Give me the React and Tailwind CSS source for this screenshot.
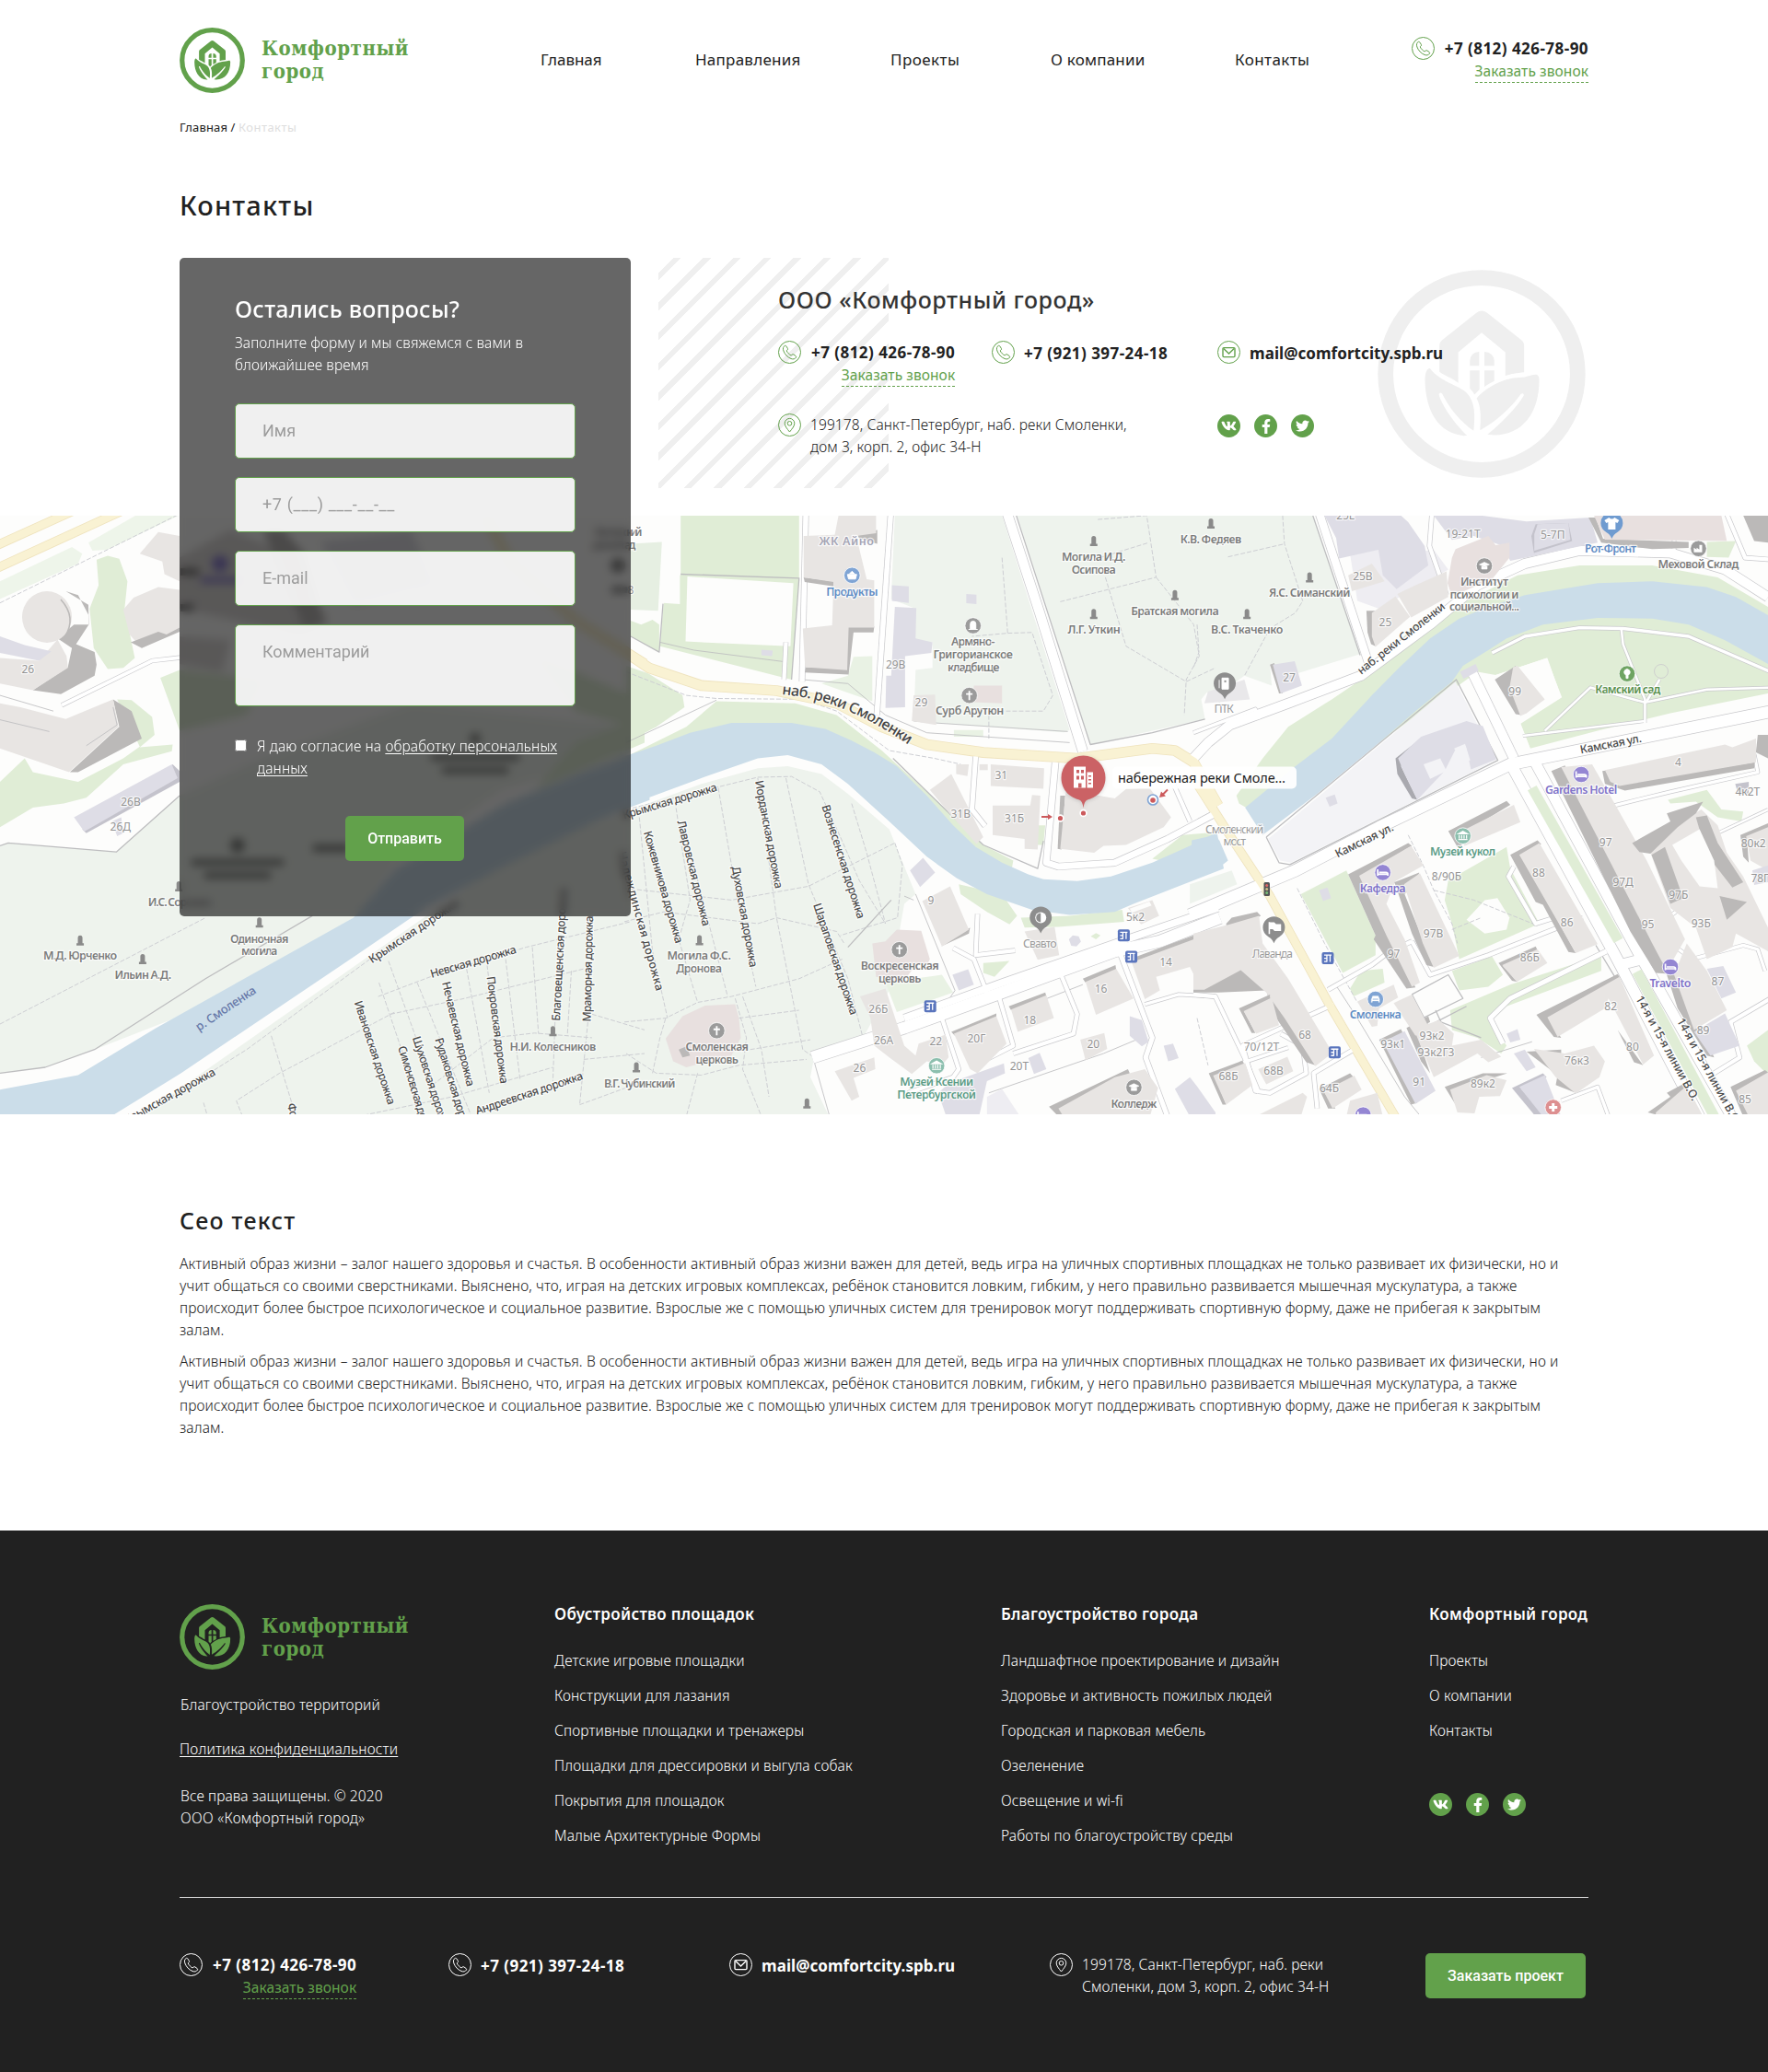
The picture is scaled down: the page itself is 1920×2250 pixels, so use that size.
import React from "react";
import { FaVk, FaFacebookF, FaTwitter } from "react-icons/fa";

/* ---------- brand ---------- */

function LogoMark({ className }) {
  return (
    <svg viewBox="20 25 676 676" className={className} fill="currentColor" aria-hidden="true">
      <circle cx="358" cy="363" r="312" fill="none" stroke="currentColor" strokeWidth="50" />
      <path d="M221 356V272Q221 260 230 253L341 165Q358 151 376 165L487 253Q496 260 496 272V358C470 361 455 362 435 370V293L358 229L282 293V392C262 376 240 370 221 356Z" />
      <path d="M320 337V320Q322 293 350 291V337ZM367 337V291Q396 293 399 320V337ZM320 352H351V414L335 430Q327 417 320 411ZM367 352H399V386Q380 395 367 405Z" />
      <path d="M190 345C180 345 174 360 174 385C176 480 215 556 300 564L311 563C285 540 235 480 219 430Q221 421 229 426C250 470 290 520 332 548C337 500 338 455 310 425C285 400 222 388 190 345Z" />
      <path d="M538 366Q545 370 545 382C546 490 490 562 400 562L377 560C420 525 470 475 495 433Q496 424 486 428C460 465 410 515 353 546C356 500 356 470 342 442C370 408 430 376 480 375C510 374 525 362 538 366Z" />
    </svg>
  );
}

function Logo() {
  return (
    <div className="flex items-center gap-[18px] text-[#62a14b]">
      <LogoMark className="size-[71px]" />
      <div className="font-['DejaVu_Serif_Condensed','DejaVu_Serif',serif] text-[22px] leading-[25px] font-bold tracking-[0.55px]">
        Комфортный
        <br />
        город
      </div>
    </div>
  );
}

/* ---------- small icons ---------- */

function Ring({ children }) {
  return (
    <svg viewBox="0 0 25 25" className="size-[25px] shrink-0" fill="none" stroke="currentColor" strokeWidth="1" aria-hidden="true">
      <circle cx="12.5" cy="12.5" r="12" />
      {children}
    </svg>
  );
}
const PhoneIcon = () => (
  <Ring>
    <path d="M7.2 5.5C5.4 6.5 5 8.5 5.9 11C7.4 14.9 10.2 17.9 14 19.5C16.4 20.4 18.3 19.9 19.5 18.1C19.8 17.5 19.7 17 19.2 16.6L16.8 14.9C16.2 14.5 15.6 14.6 15.1 15.1L14.2 16C12.1 15 10.1 12.9 9.2 10.9L10.1 10C10.6 9.5 10.7 9 10.4 8.4L8.8 5.9C8.4 5.3 7.9 5.1 7.2 5.5Z" />
  </Ring>
);
const MailIcon = () => (
  <Ring>
    <rect x="6" y="7.6" width="13" height="10" rx="1" strokeWidth="1.4" />
    <path d="M6.8 8.4L12.5 14L18.2 8.4" strokeWidth="1.4" />
  </Ring>
);
const PlaceIcon = () => (
  <Ring>
    <path d="M12.5 20C9.6 16.4 7.2 13.6 7.2 10.7A5.3 5.3 0 0 1 17.8 10.7C17.8 13.6 15.4 16.4 12.5 20Z" />
    <circle cx="12.5" cy="10.8" r="2.3" />
  </Ring>
);

function Socials() {
  return (
    <div className="flex gap-[15px] text-white">
      <a className="flex size-[25px] items-center justify-center rounded-full bg-[#62a14b]"><FaVk className="size-[17px]" /></a>
      <a className="flex size-[25px] items-center justify-center rounded-full bg-[#62a14b]"><FaFacebookF className="size-[16px]" /></a>
      <a className="flex size-[25px] items-center justify-center rounded-full bg-[#62a14b]"><FaTwitter className="size-[15px]" /></a>
    </div>
  );
}

/* ---------- contact pieces ---------- */

function Callback() {
  return (
    <div className="flex gap-[11px]">
      <PhoneIcon />
      <div className="flex flex-col items-end pt-px">
        <span className="text-[17px] leading-6 font-bold tracking-[0.46px] text-[var(--ink)]">+7 (812) 426-78-90</span>
        <a className="border-b border-dashed border-[#62a14b] text-[15.5px] leading-6 tracking-[0.08px] text-[#62a14b]">Заказать звонок</a>
      </div>
    </div>
  );
}
function Line({ icon, children }) {
  return (
    <div className="flex gap-[10px]">
      {icon}
      <div className="pt-[2px] text-[17px] leading-6 font-bold text-[var(--ink)]">{children}</div>
    </div>
  );
}

/* ---------- map ---------- */

const TILES = {
  A: { ox: 0, sx: 2.24 },
  B: { ox: 680, sx: 2.45 },
  C: { ox: 1300, sx: 2.529 },
};
const SY = 2.34;
const at = (t, x, y) => [TILES[t].ox + x / TILES[t].sx, 550 + y / SY];

const GREEN = "#e0edd6", GRAVE = "#eef3ed", WATER = "#cbdde9", B1 = "#e8e5e3", B2 = "#bbb9b8", LIL = "#deDDe6", LIL2 = "#c4c3cc", W = "#fdfdfc";
const ROAD = "#fff", EDGE = "#c9c9cc", YEL = "#f9f2d3", YEDGE = "#efe3bd";

/* [fill, points] */
const FILLS = {
  A: [
    ["#eef5ea", "215,92 330,23 435,23 260,110 225,112"],
    ["#eef5ea", "0,190 175,103 200,120 190,145 0,235"],
    [GREEN, "235,135 262,125 290,133 310,190 303,260 328,385 300,410 262,413 228,360 218,260 240,200"],
    [GREEN, "390,435 437,415 640,440 600,530 437,570"],
    [GREEN, "1300,380 1400,420 1534,480 1534,560 1400,520"],
    [GREEN, "0,700 60,640 80,675 190,700 300,640 340,610 285,490 320,492 370,535 376,580 340,612 420,605 418,622 300,655 210,740 155,755 80,765 0,815"],
    [GRAVE, "0,862 20,855 283,878 437,735 640,640 1000,500 1534,560 1534,625 1220,720 960,910 860,1045 500,1270 230,1380 110,1425 0,1440"],
    [GRAVE, "350,1545 470,1455 1010,1060 1300,850 1534,775 1568,768 1568,1545"],
    [GREEN, "1400,600 1534,545 1568,570 1568,600 1300,720"],
    [WATER, "0,1482 190,1445 380,1325 860,1045 963,920 1230,755 1430,670 1534,632 1580,612 1580,746 1534,764 1447,800 1230,912 1035,1020 860,1145 440,1440 270,1550 0,1550"],
    ["#dedbda", "437,130 560,60 700,120 800,290 730,330 620,300 437,260"],
    ["#bbb8b7", "640,60 690,60 740,120 790,300 740,310 690,180"],
    ["#dedbda", "437,330 560,340 540,420 437,400"],
    ["#e0dfe6", "780,90 1000,60 1060,200 860,250"],
    [B1, "340,120 385,65 437,75 437,190 400,172 395,140"],
    [B1, "300,262 325,232 385,205 437,212 437,310 345,360 315,325"],
    [B2, "318,345 345,360 437,318 437,308 405,325 385,318"],
    [B2, "140,335 180,300 215,300 215,275 190,225 160,215 215,250 216,300 185,350 230,370 235,402 230,430 148,477 80,467 165,408 175,360"],
    [B1, "0,385 95,392 140,338 162,380 165,410 80,467 0,450"],
    [LIL, "0,330 60,352 125,368 95,392 0,372"],
    [B2, "275,490 320,520 345,590 190,675 170,675 290,560"],
    [B1, "0,500 50,510 140,535 160,540 275,490 288,560 168,675 0,615"],
    [LIL2, "420,655 437,672 437,700 210,830 200,820"],
    [LIL, "180,790 418,655 432,690 205,826"],
    [LIL, "272,800 295,790 300,830 285,838"],
  ],
  B: [
    [GREEN, "145,23 460,23 460,182 440,440 90,355 100,245 145,172"],
    [W, "100,23 143,23 143,248 98,245"],
    [W, "163,178 445,195 437,355 158,343"],
    ["#e6efe2", "12,95 95,90 85,265 12,262"],
    [GREEN, "12,290 40,300 70,288 88,300 88,370 12,330"],
    [GREEN, "0,405 60,425 150,480 155,510 80,560 0,600"],
    [GRAVE, "715,23 1000,23 1180,568 1165,574 820,550 765,545 770,415 815,410 815,345 745,340 770,260 705,235"],
    [GRAVE, "1040,23 1580,23 1580,500 1545,472 1530,490 1540,540 1235,605"],
    ["#e9f2e4", "605,382 655,380 655,495 520,450 590,430"],
    [GRAVE, "0,775 200,705 350,665 430,660 520,680 590,730 700,820 770,985 740,1010 700,1230 630,1350 500,1400 490,1450 540,1550 0,1550"],
    [GREEN, "12,630 160,560 240,495 450,500 560,530 680,620 800,725 950,860 1030,900 1025,925 950,890 800,765 600,610 440,570"],
    [GREEN, "885,960 1000,985 1040,1040 1020,1062 960,1030 890,985"],
    [GREEN, "1050,1045 1180,1040 1320,1025 1325,1055 1150,1068 1060,1070"],
    [GREEN, "1400,895 1480,835 1568,828 1568,860 1500,880 1450,905"],
    [GREEN, "950,1160 1020,1155 980,1195 950,1185"],
    ["#e9f2e4", "690,1210 840,1190 870,1235 720,1285"],
    [GREEN, "1090,810 1115,810 1110,860 1090,860"],
    [GREEN, "1236,1092 1250,1084 1262,1090 1250,1100"],
    ["#e9f2e4", "872,568 950,568 950,585 872,585"],
    [WATER, "-20,640 80,608 170,575 280,550 440,550 530,565 600,595 660,625 720,660 800,735 870,810 930,865 1000,905 1070,935 1110,947 1200,952 1290,940 1400,905 1500,862 1572,828 1590,920 1350,1010 1300,1030 1180,1038 1080,1025 960,985 880,945 800,890 700,800 590,705 520,655 430,632 350,640 200,690 -20,768"],
  ],
  C: [
    [GRAVE, "-40,23 318,23 448,375 220,440 200,400 205,455 130,430 100,450 -40,480"],
    ["#eeedf2", "410,60 560,120 650,110 690,160 500,260 440,240"],
    [GREEN, "115,755 108,735 180,640 250,560 370,490 450,440 600,300 750,235 880,175 1050,150 1250,150 1430,180 1568,255 1568,475 1300,525 1100,570 915,615 888,550 1000,485 962,385 820,428 770,420 200,800"],
    [W, "760,430 820,428 960,385 1002,485 888,552 915,615 840,620"],
    [GREEN, "285,985 410,925 490,1090 490,1140 400,1185"],
    [GREEN, "420,1225 450,1180 510,1175 515,1210 430,1245"],
    [GREEN, "680,1000 690,950 850,865 860,920 940,1060 720,1150 700,1060"],
    [W, "740,1050 790,1000 825,995 858,1045 850,1075 790,1085"],
    [GREEN, "700,1180 810,1143 840,1190 800,1220 720,1230"],
    [GREEN, "695,1280 860,1215 1110,1140 1110,1180 850,1270 805,1310 850,1370 835,1390 770,1350 700,1330"],
    [GREEN, "1293,745 1400,720 1440,770 1500,775 1495,800 1430,790 1370,750 1300,755"],
    [GREEN, "1510,1370 1568,1330 1568,1445 1530,1410"],
    [GREEN, "1400,90 1480,88 1460,130 1400,128"],
    [GRAVE, "-20,960 95,925 110,960 -20,1010"],
    [WATER, "-15,848 50,835 62,850 85,900 60,918 -15,948"],
    [WATER, "132,765 270,660 370,590 480,480 560,405 640,335 720,285 800,255 900,225 1000,210 1100,195 1250,190 1400,205 1480,230 1572,278 1572,402 1450,340 1350,300 1250,285 1100,283 950,300 850,335 800,365 730,405 700,445 600,520 500,600 330,730 180,835"],
  ],
};

/* [width, points, kind]; kind r = cased white road, g = green median, y = yellow road, d = dashed path, s = thin solid line */
const LINES = {
  A: [
    [22, "-10,100 185,8", "y"], [22, "-10,158 310,5", "y"],
    [2, "0,245 435,20", "d"],
    [9, "150,505 370,392 437,384", "r"],
    [2, "0,480 130,520", "s"], [2, "0,542 120,572", "s"], [2, "210,608 285,555 275,510", "s"],
    [3, "0,862 20,855 283,878 437,735", "s"],
    [2, "0,1315 500,1045", "d"],
    [3, "0,1440 110,1425 230,1380 500,1200 760,1040", "s"],
    [2, "900,1150 600,1380 350,1545", "d"],
    [2, "920,1245 1060,1190 1280,1120 1534,1055", "d"],
    [2, "950,1290 1130,1250 1420,1175", "d"],
    [2, "945,1155 1060,1490", "d"], [2, "922,1210 1030,1545", "d"], [2, "1015,1210 1145,1545", "d"],
    [2, "1135,1175 1190,1490", "d"], [2, "1185,1165 1200,1300 1230,1470", "d"], [2, "1230,1150 1265,1455", "d"],
    [2, "1295,1120 1310,1340", "d"], [2, "1390,1180 1380,1345", "d"],
    [2, "1040,1480 1200,1350 1300,1338 1440,1350", "d"],
    [2, "660,1345 720,1550", "d"], [2, "590,1550 575,1510 680,1440 960,1285", "d"],
    [2, "870,1550 1100,1500 1345,1425", "d"], [2, "1440,1290 1568,1330", "d"], [2, "1420,1405 1568,1390", "d"], [2, "1430,1310 1410,1520", "d"], [2, "1350,1310 1345,1460", "d"],
    [2, "1410,1520 1568,1460", "d"], [2, "495,1515 505,1550", "d"],
    [26, "1180,20 1240,140 1400,290 1568,400", "y"],
  ],
  B: [
    [2, "-5,970 280,1000 485,965 715,855", "d"], [2, "-5,1055 100,1030 350,1060 400,1045 560,1080 580,1110", "d"],
    [2, "35,790 70,1130 110,1300", "d"], [2, "130,750 170,1000 140,1100 190,1260", "d"], [2, "150,800 270,1245", "d"],
    [2, "245,715 300,1020 345,1220", "d"], [2, "350,690 400,1045 470,1380 500,1400", "d"], [2, "425,690 485,960 590,1200 630,1350", "d"],
    [2, "0,770 350,688 440,686 515,725 570,840 620,950 690,1060", "d"], [2, "600,755 640,880 690,1060", "d"],
    [2, "715,855 735,910 722,1045 570,1090", "d"], [3, "590,1120 705,1000", "s"], [2, "765,1000 740,990", "s"],
    [2, "-5,1310 105,1300 190,1260 280,1245 460,1200 575,1150", "d"],
    [2, "70,1440 90,1350 105,1300", "d"], [2, "0,1390 80,1440 200,1445 300,1420 480,1405", "d"], [2, "310,1245 360,1380 380,1500", "d"], [2, "290,1250 320,1350 310,1430 360,1550", "d"],
    [2, "190,1440 160,1550", "d"], [2, "300,1300 460,1280", "d"], [2, "330,1380 490,1355", "d"],
    [2, "1155,242 1410,180", "d"], [2, "1410,180 1510,300 1525,380 1490,440 1485,530", "d"], [2, "1275,180 1330,355 1490,445 1568,410", "d"],
    [2, "1255,33 1385,23 1410,180", "d"], [2, "1260,130 1390,92", "d"],
    [2, "1000,130 1015,322 920,330", "d"], [2, "1015,322 1080,320 1135,480 1110,520 965,520 965,590", "d"],
    [3, "145,172 460,182 440,440", "s"], [3, "98,247 88,370 12,330", "s"], [2, "90,345 180,365 425,395", "s"],
    [2, "0,420 160,480 240,488 470,490 560,520 700,620 820,640 890,655", "d"],
    [2, "0,600 240,492", "s"],
    [26, "-5,368 60,410 200,455 400,468 560,500 680,560 800,605 950,625 1200,640 1400,615 1460,620 1510,650 1575,760", "y"],
    [2, "470,440 590,450 690,530 800,575 1180,600", "s"],
    [2, "765,545 820,550 1175,572", "s"],
    [13, "478,20 468,445", "r"], [13, "704,20 667,530", "r"], [10, "425,345 420,440", "r"],
    [24, "1014,18 1100,270 1215,622", "r"], [3, "1038,23 1235,605 1400,575 1540,540", "s"],
    [16, "1142,650 1118,905 1150,915 1300,905 1440,845 1568,780", "r"],
    [3, "710,640 860,780 950,860 1095,920 1110,850", "s"],
    [12, "930,635 920,770 955,812", "r"],
    [10, "1440,670 1500,800", "r"],
    [30, "495,1400 740,1325 1000,1235 1300,1130 1420,1105 1580,1045", "r"],
    [18, "740,1300 1000,1210 1330,1100 1575,1020", "r"],
    [10, "870,1122 925,1150 960,1235", "r"], [10, "935,1035 930,1140 1035,1128", "r"],
    [10, "990,1240 1030,1370 965,1402", "r"], [10, "1155,1185 1200,1290 1190,1340 1030,1390", "r"],
    [12, "1312,1130 1400,1350 1382,1400 1440,1550", "r"], [8, "1380,1265 1470,1240 1568,1245", "r"],
    [10, "840,1300 885,1430 870,1450 750,1490", "r"],
    [2, "770,985 875,1230 860,1250", "s"],
    [2, "500,1410 540,1545", "s"], [2, "965,1490 1270,1390 1370,1350", "s"], [2, "1120,1250 1215,1215", "s"],
  ],
  C: [
    [2, "235,23 240,95 290,240 270,270 200,310 130,430", "d"], [2, "85,128 240,95", "d"], [2, "0,300 5,370 -10,410", "d"],
    [22, "-10,690 100,850 200,990 360,1260 560,1575", "y"],
    [24, "-10,640 30,600 90,555 250,500 450,430 640,300 770,200 900,145 1050,112 1300,118 1450,160 1568,230", "r"],
    [20, "336,18 470,395", "r"], [3, "318,23 448,378", "s"],
    [10, "645,20 638,100 685,225", "r"], [10, "1455,20 1505,130 1575,135", "r"], [8, "1310,80 1310,130", "r"],
    [8, "-10,575 160,515 170,540", "r"],
    [3, "190,840 712,440 826,645 255,910 225,905 190,840", "s"],
    [30, "-20,1038 270,925 500,815 860,655 1100,610 1580,520", "r"],
    [24, "755,420 870,640", "r"],
    [28, "865,660 1145,1135 1165,1170 1390,1570", "r"], [26, "925,645 1215,1140 1240,1180 1480,1570", "r"], [26, "1160,1165 1245,1145", "r"],
    [26, "920,715 1157,1103", "g"], [26, "1208,1182 1432,1570", "g"],
    [8, "810,372 900,330 1050,308 1170,310 1350,330 1575,420", "r"], [6, "1165,310 1170,350 1230,490 1230,550", "r"],
    [6, "955,570 1080,460 1230,498 1400,465 1575,460", "r"], [6, "1235,495 1270,440", "r"],
    [6, "895,583 1230,545", "r"],
    [2, "650,975 760,1000 935,1065", "d"], [2, "580,835 620,910 650,975 700,1060 715,1110", "d"], [2, "700,1075 780,1045", "d"],
    [10, "360,1228 480,1165 530,1130 590,1105", "r"], [10, "590,1105 640,1190 800,1140 1060,1045", "r"],
    [10, "870,915 855,940 930,1060 1000,1040", "r"],
    [12, "840,1365 805,1300 860,1250 1125,1130", "r"],
    [3, "590,1240 690,1190 730,1250 620,1300", "s"], [3, "655,1280 670,1310 780,1350", "s"], [3, "590,1240 635,1320 740,1270", "s"],
    [10, "375,1265 125,1370 160,1485 200,1490 300,1440 290,1370 230,1340", "r"],
    [10, "-10,1240 50,1245 130,1400 170,1490", "r"], [10, "430,1380 320,1440 330,1530", "r"], [8, "120,1415 250,1375", "r"],
    [8, "1145,760 1300,725 1540,675 1530,630", "r"], [10, "1420,1440 1490,1400 1465,1310 1575,1250", "r"], [8, "1300,1110 1360,1150 1500,1115 1540,1125 1560,1180", "r"],
    [2, "380,1215 440,1300 570,1500 610,1545", "s"], [3, "1095,1115 1160,1215", "s"],
    [8, "1300,1090 1300,1040 1360,1000", "r"], [6, "1430,830 1568,770", "r"],
    [2, "275,970 350,1110 440,1260", "d"],
    [2, "0,795 50,770", "s"], [2, "0,1300 30,1420", "d"], [2, "780,1400 920,1360", "s"], [8, "1000,1510 1100,1475 1130,1550", "r"],
  ],
};

const BUILDINGS = {
  B: [
    [B2, "472,180 552,190 552,203 475,192"], [B2, "615,70 668,60 668,95 620,82"], [B2, "590,305 660,305 658,320 605,320 592,427 475,422 478,408 586,412"],
    [B1, "472,75 555,72 565,23 665,23 665,68 612,75 640,185 660,188 660,308 592,308 588,416 476,408 470,310 548,302 552,192 472,180"],
    [LIL, "707,200 752,203 752,245 707,240"], [LIL, "905,222 932,224 932,248 905,246"], [LIL, "360,364 390,366 388,380 360,378"],
    [LIL, "715,255 772,258 770,335 815,345 812,372 742,380 742,510 690,512 692,430 705,430"],
    [B1, "765,480 822,478 825,555 760,545"], ["#e8e0df", "925,455 1000,455 1000,500 920,497"],
    [B1, "878,655 912,655 908,685 878,680"], [B1, "940,655 962,655 962,670 940,670"],
    [B1, "970,655 1112,665 1110,717 970,710"], [B1, "808,720 865,680 950,840 932,857 860,780"],
    [B1, "975,760 1075,760 1080,733 1102,735 1095,872 1060,870 1060,845 975,835"],
    [B2, "1155,735 1168,735 1158,872 1148,870"],
    [B1, "1170,720 1300,742 1330,718 1392,715 1450,790 1430,815 1330,860 1270,862 1245,880 1155,870"],
    [B1, "1335,1020 1400,1000 1418,1040 1370,1062"], [W, "1340,1022 1392,1004 1398,1014 1346,1032"],
    [B1, "1060,1080 1140,1068 1152,1140 1095,1152"], [LIL, "1178,1100 1188,1090 1204,1092 1210,1106 1198,1118 1184,1116"],
    [LIL, "755,925 790,893 822,930 782,967"], [B2, "838,1118 848,1112 915,1070 912,1085"], [B1, "788,1003 862,965 912,1075 840,1118"],
    ["#e8e0df", "655,1110 690,1105 720,1075 785,1078 808,1150 800,1165 775,1160 735,1210 665,1195"],
    [LIL, "868,1190 910,1176 925,1215 885,1230"],
    [B1, "622,1245 690,1225 740,1370 770,1395 778,1365 850,1342 858,1400 840,1420 800,1410 760,1442 700,1400 660,1370 650,1300"],
    [B1, "555,1435 660,1400 663,1430 605,1452 620,1500 600,1510"],
    [B2, "865,1335 985,1288 985,1300 875,1345"], [B1, "872,1340 985,1295 1012,1365 935,1440 915,1430"],
    [B2, "1018,1270 1115,1235 1118,1245 1024,1280"], [B1, "1024,1278 1118,1242 1138,1300 1042,1335"],
    [B2, "1215,1200 1302,1165 1304,1178 1222,1210"], [B1, "1222,1208 1304,1175 1350,1250 1250,1292"],
    [B2, "1340,1150 1515,1088 1520,1100 1350,1160"], [B1, "1345,1158 1515,1098 1568,1150 1568,1228 1530,1228 1500,1170 1410,1195 1420,1230 1380,1252"],
    [B1, "1208,1355 1272,1338 1280,1378 1222,1407"],
    [LIL, "1340,1295 1372,1305 1390,1360 1372,1372 1340,1345"], [LIL, "1430,1370 1455,1365 1470,1402 1442,1410"],
    [LIL, "1070,1402 1100,1388 1118,1430 1085,1442"], [LIL, "830,1490 860,1465 1005,1415 1008,1440 960,1460 940,1545 850,1545"], ["#eeedf2", "960,1500 1000,1480 1045,1545 960,1545"],
    ["#e8e0df", "105,1352 150,1295 210,1268 290,1265 300,1300 305,1350 280,1395 160,1425 125,1410"], [B2, "140,1380 160,1372 170,1395 150,1400"],
    [B2, "1125,1525 1290,1450 1335,1430 1340,1440 1165,1535 1170,1550 1150,1550"],
    [B1, "1150,1530 1300,1450 1380,1430 1415,1478 1395,1545 1160,1545"], [LIL, "1460,1480 1500,1450 1520,1475 1568,1540 1568,1550 1500,1550"],
  ],
  C: [
    [B2, "200,402 212,398 235,475 225,475"], [LIL, "208,402 268,393 288,455 230,475"],
    ["#e9e8ea", "30,470 130,440 145,490 20,500"],
    [LIL, "350,23 560,23 580,40 625,100 635,150 548,210 510,175 498,110 390,132 382,80"],
    [B1, "415,175 480,145 515,190 425,215"],
    [B2, "465,265 500,265 490,355 478,350 468,320"], [B1, "480,270 545,228 585,280 490,357 480,330"], [B1, "550,222 600,200 685,165 690,230 588,282"],
    [LIL, "650,23 780,23 905,38 1080,28 1100,92 860,138 840,100 760,75 700,85"],
    ["#e8e0df", "700,130 710,108 800,75 820,98 858,92 858,130 810,185 700,228 688,195"],
    [LIL2, "918,75 930,45 1020,42 1030,88 925,118"],
    [LIL, "926,70 935,45 1020,42 1025,85 926,112"],
    [B2, "1075,28 1110,92 1250,108 1350,105 1350,90 1115,82 1095,28"],
    ["#e8e0df", "1090,23 1440,23 1455,88 1120,84"],
    [B2, "1500,23 1568,23 1568,92 1530,88"],
    [B2, "818,440 875,405 890,530 875,528"], [B1, "868,408 880,405 955,490 905,525 888,532 858,460"],
    [LIL, "722,420 765,400 773,418 732,438"],
    ["#f3f3f6", "195,845 710,445 820,645 258,905 228,900"],
    ["#a9a9af", "545,640 600,600 560,660 605,745 590,742 550,680"],
    [LIL, "552,640 615,585 740,545 785,558 822,642 752,668 738,608 708,620 680,672 605,745 570,680"],
    ["#f3f3f6", "622,655 668,640 685,672 640,692"], ["#f3f3f6", "706,615 736,603 750,645 730,655"],
    [LIL, "353,740 378,732 386,755 364,763"],
    [B2, "1113,672 1145,668 1160,705 1530,650 1535,625 1568,640 1568,580 1540,580 1530,665 1175,722 1120,705"],
    [B1, "1120,670 1450,605 1470,612 1535,590 1535,650 1160,710 1135,700"],
    [B2, "690,825 850,748 860,758 718,838 730,868 715,865"], [B1, "712,832 870,758 888,802 735,862"],
    [B2, "415,935 580,855 590,862 450,940 520,1080 600,1222 575,1225 485,1100 490,1090"],
    [B1, "445,938 588,862 622,912 545,952 520,1010 570,1100 612,1210 590,1220 520,1090"],
    [B2, "542,955 610,930 600,960 570,985 650,1170 630,1165 590,1085"], [B1, "568,960 612,932 720,1142 650,1172 620,1110"],
    [B2, "860,885 935,848 945,858 890,885 1040,1135 1020,1132 950,1012 930,1005"],
    [B1, "885,885 940,855 1100,1112 1040,1135 1000,1070"],
    [B2, "973,672 1010,658 1260,1090 1330,1190 1260,1185 1190,1080"],
    [B1, "1000,662 1085,655 1150,760 1235,900 1340,1100 1290,1180 1250,1110"],
    [B2, "1290,1190 1320,1190 1420,1400 1400,1395 1320,1275"],
    [B1, "1310,1190 1345,1110 1400,1180 1455,1280 1365,1330"], [LIL, "1400,1175 1445,1168 1480,1235 1440,1250"], [LIL, "1365,1335 1450,1288 1490,1370 1410,1395"],
    [B1, "1205,865 1385,770 1430,810 1455,880 1500,940 1568,1070 1568,1130 1480,1085 1470,1120 1400,1150 1370,1070 1300,1020 1245,880"],
    [B2, "1195,855 1300,800 1290,780 1390,750 1370,780 1320,815 1245,882 1215,878"], [B2, "1248,885 1285,865 1335,995 1300,1010 1265,925"],
    [B2, "1370,790 1400,785 1430,855 1500,955 1470,968 1400,885"], [B2, "1435,990 1510,1005 1455,1050"],
    [W, "1305,860 1380,820 1420,900 1430,970 1380,965 1330,900"],
    [B2, "1492,835 1568,805 1568,820 1510,845 1515,905 1500,890"], [B1, "1508,838 1568,815 1568,925 1520,900"], [LIL, "1525,925 1568,912 1568,955 1530,962"],
    [LIL2, "1478,705 1515,700 1515,730 1485,728"],
    [B2, "80,1060 95,1045 165,1030 175,1040 110,1070 120,1175 180,1200 325,1420 300,1412 210,1290 190,1230 60,1235 -10,1235 -10,1215 90,1180"],
    [B1, "-10,1085 90,1062 170,1040 180,1110 250,1200 372,1388 325,1422 240,1300 190,1235 120,1178 20,1228 -10,1228"],
    [B2, "115,1275 200,1240 200,1252 130,1285 160,1338 150,1338"], [B1, "128,1282 205,1248 225,1318 162,1340"],
    [B2, "828,1160 930,1118 935,1128 840,1168 880,1208 865,1205"], [B1, "838,1165 935,1125 962,1160 878,1208"],
    [B2, "932,1292 1155,1188 1162,1198 965,1300 1000,1350 980,1348"], [B1, "962,1298 1160,1195 1255,1395 1225,1418 1130,1250 1120,1275 990,1348"],
    [B2, "1155,1330 1225,1420 1200,1412"],
    [B2, "905,1385 1000,1380 1000,1440 1040,1490 985,1470 990,1445"], [B1, "925,1378 1010,1390 1090,1370 1120,1410 1105,1450 1040,1492 985,1450"],
    [B2, "680,1475 785,1440 852,1440 700,1485 720,1535"], [B1, "695,1482 795,1445 850,1458 832,1498 775,1500 762,1542 715,1540"],
    [B2, "500,1355 560,1328 565,1338 520,1362 605,1515 588,1520"], [LIL, "510,1360 570,1333 655,1485 600,1518"],
    [B2, "575,1325 635,1295 640,1310 600,1330 640,1440 615,1410"], [B1, "595,1328 665,1305 705,1340 700,1370 780,1355 835,1398 800,1412 770,1390 650,1450"],
    [B1, "440,1258 540,1215 552,1248 500,1275 495,1320 480,1322"], [B1, "540,1262 590,1240 635,1320 600,1345"],
    [LIL, "850,1340 880,1328 888,1355 860,1362"], [LIL, "335,975 358,968 368,995 346,1003"],
    [B2, "32,1440 125,1408 130,1418 48,1448 80,1520 70,1520"], [B1, "44,1446 132,1414 152,1470 80,1520"],
    [B1, "168,1430 248,1398 264,1435 190,1468"], [B2, "335,1480 420,1440 430,1450 350,1490 380,1530 360,1530"], [B1, "348,1486 432,1446 452,1482 372,1530"],
    [LIL2, "865,1478 950,1440 960,1450 890,1480 960,1550 930,1550"], [LIL, "885,1475 955,1445 1000,1550 950,1550"], [LIL, "870,1390 900,1380 930,1425 905,1435"],
    [B2, "1238,1540 1300,1500 1290,1490 1340,1465 1345,1475 1260,1545"], [B1, "1260,1540 1345,1472 1390,1550 1260,1550"],
    [B1, "1475,1480 1568,1438 1568,1550 1510,1550"], [B2, "1465,1475 1560,1432 1568,1438 1480,1485 1515,1550 1500,1550"],
    [B1, "160,1550 290,1490 302,1500 285,1550"], [B1, "410,1550 420,1510 495,1490 510,1550"], [LIL, "-10,1500 20,1550 -10,1550"],
  ],
};

/* [tile, centre x, baseline y, width, text] */
const PLACES = [
  ["A", 195, 1152, 180, "М.Д. Юрченко"], ["A", 348, 1200, 138, "Ильин А.Д."], ["A", 631, 1108, 142, "Одиночная"], ["A", 631, 1140, 88, "могила"],
  ["A", 437, 1015, 154, "И.С. Сорокин"], ["A", 1345, 1382, 210, "Н.И. Колесников"],
  ["B", 36, 1476, 190, "В.Г. Чубинский"], ["B", -20, 74, 126, "Смоленский"], ["B", -32, 107, 114, "детский сад"],
  ["B", 923, 354, 116, "Армяно-"], ["B", 923, 386, 212, "Григорианское"], ["B", 924, 419, 138, "кладбище"], ["B", 914, 529, 182, "Сурб Арутюн"],
  ["B", 1244, 139, 170, "Могила И.Д."], ["B", 1244, 171, 118, "Осипова"], ["B", 1245, 322, 140, "Л.Г. Уткин"], ["B", 1460, 275, 234, "Братская могила"],
  ["B", 194, 1152, 170, "Могила Ф.С."], ["B", 194, 1185, 122, "Дронова"], ["B", 242, 1384, 168, "Смоленская"], ["B", 242, 1416, 114, "церковь"],
  ["B", 728, 1178, 208, "Воскресенская"], ["B", 728, 1210, 114, "церковь"], ["B", 1351, 1527, 122, "Колледж"],
  ["C", 38, 93, 168, "К.В. Федяев"], ["C", 309, 230, 224, "Я.С. Симанский"], ["C", 137, 323, 198, "В.С. Ткаченко"],
  ["C", 789, 201, 132, "Институт"], ["C", 789, 233, 190, "психологии и"], ["C", 789, 265, 192, "социальной..."], ["C", 1377, 157, 222, "Меховой Склад"],
];
const TINTED = [
  ["B", 601, 226, 138, "Продукты", "#5f8cc4"], ["C", 1136, 117, 142, "Рот-Фронт", "#5f8cc4"], ["C", 490, 1302, 142, "Смоленка", "#5f8cc4"],
  ["B", 826, 1473, 196, "Музей Ксении", "#5b9c86"], ["B", 826, 1505, 210, "Петербургской", "#5b9c86"], ["C", 730, 887, 180, "Музей кукол", "#5b9c86"],
  ["C", 1183, 476, 180, "Камский сад", "#5a9150"], ["C", 1055, 730, 198, "Gardens Hotel", "#8073c9"], ["C", 510, 981, 126, "Кафедра", "#8073c9"], ["C", 1300, 1221, 114, "Travelto", "#8073c9"],
  ["B", 586, 98, 146, "ЖК Айно", "#a5a5b5"], ["B", 1101, 1120, 90, "Свавто", "#999"], ["C", 74, 525, 54, "ПТК", "#999"], ["C", 207, 1146, 112, "Лаванда", "#999"],
  ["C", 103, 830, 160, "Смоленский", "#999"], ["C", 103, 861, 62, "мост", "#999"],
];
const NUMBERS = [
  ["A", 68, 424, "26"], ["A", 318, 760, "26В"], ["A", 293, 824, "26Д"],
  ["B", 12, 223, "8"], ["B", 717, 412, "29В"], ["B", 785, 507, "29"], ["B", 998, 692, "31"], ["B", 890, 790, "31В"], ["B", 1033, 802, "31Б"], ["B", 811, 1010, "9"], ["B", 1355, 1053, "5к2"],
  ["B", 671, 1288, "26Б"], ["B", 685, 1367, "26А"], ["B", 621, 1436, "26"], ["B", 824, 1369, "22"], ["B", 932, 1361, "20Г"], ["B", 1074, 1314, "18"], ["B", 1263, 1236, "16"], ["B", 1436, 1168, "14"], ["B", 1243, 1375, "20"], ["B", 1046, 1432, "20Т"],
  ["C", 253, 444, "27"], ["C", 455, 187, "25В"], ["C", 517, 304, "25"], ["C", 408, 33, "25Е"], ["C", 730, 80, "19-21Т"], ["C", 977, 82, "5-7П"], ["C", 873, 479, "99"], ["C", 1321, 661, "4"], ["C", 1512, 734, "4к2Т"],
  ["C", 685, 949, "8/90Б"], ["C", 938, 941, "88"], ["C", 1122, 863, "97"], ["C", 1170, 964, "97Д"], ["C", 1322, 996, "97Б"], ["C", 1528, 866, "80к2"], ["C", 1546, 954, "78Г"], ["C", 1384, 1069, "93Б"], ["C", 1238, 1072, "95"],
  ["C", 1016, 1066, "86"], ["C", 914, 1157, "86Б"], ["C", 649, 1096, "97В"], ["C", 540, 1147, "97"], ["C", 1430, 1217, "87"], ["C", 1136, 1279, "82"], ["C", 1390, 1340, "89"], ["C", 296, 1352, "68"], ["C", 177, 1384, "70/12Т"], ["C", 645, 1354, "93к2"],
  ["C", 538, 1376, "93к1"], ["C", 656, 1398, "93к2Г3"], ["C", 1196, 1382, "80"], ["C", 1043, 1417, "76к3"], ["C", 86, 1457, "68Б"], ["C", 210, 1443, "68В"], ["C", 363, 1488, "64Б"], ["C", 610, 1471, "91"], ["C", 785, 1476, "89к2"], ["C", 1505, 1516, "85"],
];
/* street names: [tile, x1, y1, x2, y2, text], baseline end points */
const STREETS = [
  ["A", 905, 1162, 1118, 1013, "Крымская дорожка"], ["A", 1050, 1198, 1258, 1134, "Невская дорожка"], ["A", 1075, 1210, 1136, 1475, "Нечаевская дорожка"], ["A", 1184, 1195, 1217, 1468, "Покровская дорожка"],
  ["A", 1362, 1308, 1379, 970, "Благовещенская дорожка"], ["A", 1437, 1310, 1443, 1040, "Мраморная дорожка"], ["A", 861, 1260, 944, 1522, "Ивановская дорожка"], ["A", 968, 1374, 1042, 1630, "Симоновская дорожка"],
  ["A", 1003, 1350, 1078, 1590, "Шуховская дорожка"], ["A", 1058, 1354, 1135, 1615, "Рудаковская дорожка"], ["A", 1160, 1546, 1420, 1455, "Андреевская дорожка"], ["A", 308, 1570, 526, 1443, "Крымская дорожка"], ["A", 699, 1518, 740, 1740, "Фоминская дорожка"],
  ["B", -22, 880, 80, 1232, "Надеждинская дорожка"], ["B", -6, 795, 244, 722, "Крымская дорожка"], ["B", 136, 800, 204, 1068, "Лавровская дорожка"], ["B", 46, 828, 132, 1112, "Кожевникова дорожка"],
  ["B", 343, 698, 396, 972, "Иорданская дорожка"], ["B", 281, 916, 329, 1172, "Духовская дорожка"], ["B", 520, 762, 616, 1050, "Вознесенская дорожка"], ["B", 497, 1012, 597, 1294, "Шараповская дорожка"],
  ["C", 451, 428, 684, 258, "наб. реки Смоленки"], ["C", 386, 893, 542, 822, "Камская ул."], ["C", 1054, 628, 1222, 598, "Камская ул."], ["C", 1204, 1250, 1360, 1512, "14-я и 15-я линии В.О."], ["C", 1317, 1307, 1476, 1572, "14-я и 15-я линии В.О."],
];
const TOMBS = [
  ["A", 195, 1103], ["A", 347, 1150], ["A", 631, 1057], ["A", 435, 965], ["A", 1345, 1333], ["A", 1548, 1425],
  ["B", 1244, 88], ["B", 1460, 225], ["B", 1244, 273], ["B", 195, 1102], ["B", 481, 1517], ["C", 38, 43], ["C", 309, 180], ["C", 137, 273],
];

/* glyphs for round place markers, drawn around 0,0 */
const CROSS = <path d="M0-5V5M-3.5-1.5H3.5" stroke="#fff" strokeWidth="1.8" />;
const BED = <path d="M-5.5-3.5V3.5M-5.5 2H5.5V3.5M-2 0H3.5Q5.5 0 5.5 2M-4 0H-2" stroke="#fff" strokeWidth="1.7" fill="none" />;
const MUSEUM = <path d="M-5-2.2L0-5L5-2.2ZM-4-1V3M-1.3-1V3M1.3-1V3M4-1V3M-5 4H5" stroke="#fff" strokeWidth="1.2" fill="#fff" />;
const CAP = <path d="M-5.5-1.5L0-4L5.5-1.5L0 1ZM-3 .5V3.5H3V.5" fill="#fff" stroke="#fff" strokeWidth=".6" />;
const MARKERS = [
  ["B", 601, 175, "#7fa4d4", <path key="i" d="M-5-1H5L3.8 4H-3.8ZM-3-1.5L0-4.5L3-1.5" fill="#fff" stroke="#fff" />],
  ["B", 923, 303, "#9b9b9b", <path key="i" d="M-3 4V-2A3 3 0 0 1 3-2V4ZM-5 4H5" fill="#fff" stroke="#fff" />],
  ["B", 913, 480, "#9b9b9b", CROSS], ["B", 727, 1126, "#9b9b9b", CROSS], ["B", 241, 1332, "#9b9b9b", CROSS],
  ["B", 826, 1421, "#8cbfae", MUSEUM], ["B", 1351, 1476, "#9b9b9b", CAP], ["C", 789, 151, "#9b9b9b", CAP],
  ["C", 1377, 107, "#9b9b9b", <path key="i" d="M-5 4V-1L-2 1V-1L1 1V-4H4V4Z" fill="#fff" />],
  ["C", 1181, 425, "#6fa463", <path key="i" d="M0-5A4 3.4 0 0 1 1 1.4V5H-1V1.4A4 3.4 0 0 1 0-5Z" fill="#fff" stroke="#fff" />],
  ["C", 1055, 681, "#9486d3", BED], ["C", 510, 930, "#9486d3", BED], ["C", 1300, 1170, "#9486d3", BED], ["C", 456, 1546, "#9486d3", BED],
  ["C", 730, 837, "#8cbfae", MUSEUM],
  ["C", 490, 1252, "#7fa4d4", <path key="i" d="M-5 4V0L-3.4-4H3.4L5 0V4H3V2.5H-3V4ZM-3 0H3" fill="#fff" stroke="#7fa4d4" strokeWidth=".8" />],
  ["C", 978, 1527, "#dd8f90", <path key="i" d="M0-4.5V4.5M-4.5 0H4.5" stroke="#fff" strokeWidth="3" />],
];
const PINS = [
  ["B", 1103, 1045, "#8d8d8d", <g key="i"><circle r="6" fill="#fff" /><path d="M0-5A5 5 0 0 0 0 5ZM2-4V4" fill="#8d8d8d" /></g>],
  ["C", 76, 450, "#8d8d8d", <path key="i" d="M-3-6H4V6H-3ZM-1-4H2V-1H-1ZM-6-4V5" fill="#fff" fillRule="evenodd" stroke="#fff" strokeWidth="1" />],
  ["C", 211, 1070, "#8d8d8d", <path key="i" d="M-5-6V7M-5-5L0-5L2-3H7V3H1L-1 1H-5" fill="#fff" stroke="#fff" strokeWidth="1.6" />],
  ["C", 1139, 42, "#6f9bd0", <path key="i" d="M-3-6L-8-3L-6 0L-4-1V7H4V-1L6 0L8-3L3-6Q0-3-3-6Z" fill="#fff" />],
];
const STOPS = [["B", 1324, 1090], ["B", 1344, 1144], ["B", 809, 1270], ["C", 359, 1148], ["C", 378, 1387]];

const dots = (s, t) => s.split(" ").map((p) => { const [x, y] = p.split(",").map(Number); return at(t, x, y).map((v) => v.toFixed(1)).join(","); }).join(" ");

function Polys({ data }) {
  return Object.keys(data).map((t) => <g key={t}>{data[t].map(([f, p], i) => <polygon key={i} points={dots(p, t)} fill={f} />)}</g>);
}
function Roads() {
  const all = Object.keys(LINES).flatMap((t) => LINES[t].map(([w, p, k]) => ({ w: w / 2.35, p: dots(p, t), k })));
  const join = { fill: "none", strokeLinejoin: "round" };
  return (
    <g>
      {all.filter((l) => l.k === "d").map((l, i) => <polyline key={"d" + i} points={l.p} {...join} stroke="#cdced3" strokeWidth="1" strokeDasharray="5 2" />)}
      {all.filter((l) => l.k === "s").map((l, i) => <polyline key={"s" + i} points={l.p} {...join} stroke="#bdbdbf" strokeWidth={l.w} />)}
      {all.filter((l) => l.k === "r").map((l, i) => <polyline key={"e" + i} points={l.p} {...join} stroke={EDGE} strokeWidth={l.w + 1.4} />)}
      {all.filter((l) => l.k === "y").map((l, i) => <polyline key={"f" + i} points={l.p} {...join} stroke={YEDGE} strokeWidth={l.w + 0.6} />)}
      {all.filter((l) => l.k === "r").map((l, i) => <polyline key={"r" + i} points={l.p} {...join} stroke={ROAD} strokeWidth={l.w} />)}
      {all.filter((l) => l.k === "y").map((l, i) => <polyline key={"y" + i} points={l.p} {...join} stroke={YEL} strokeWidth={l.w - 1} />)}
      {all.filter((l) => l.k === "g").map((l, i) => <polyline key={"g" + i} points={l.p} {...join} stroke={GREEN} strokeWidth={l.w} />)}
    </g>
  );
}

function CityMap() {
  const halo = { stroke: "#fff", strokeOpacity: 0.75, strokeWidth: 2.4, paintOrder: "stroke", strokeLinejoin: "round" };
  return (
    <svg viewBox="0 560 1920 650" className="block h-[650px] w-full font-['Noto_Sans',sans-serif]" role="img" aria-label="Карта">
      <defs>
        <path id="embankment" d="M849 754 C880 757 900 763 921 772 S962 792 987 809" />
      </defs>
      <rect x="0" y="560" width="1920" height="650" fill={W} />
      <Polys data={FILLS} />
      <Roads />
      <Polys data={BUILDINGS} />
      <ellipse cx="51" cy="670" rx="27" ry="28" fill={B1} />
      <path d="M66 651Q84 671 70 692" fill="none" stroke={B2} strokeWidth="1.5" />
      <circle cx="1804" cy="729" r="7.5" fill={GREEN} stroke="#cfd0cf" />
      <g fill="#222" opacity=".5">
        <circle cx="258" cy="918" r="8" /><rect x="208" y="933" width="100" height="7" /><rect x="222" y="947" width="72" height="7" />
        <rect x="340" y="917" width="40" height="8" /><rect x="468" y="819" width="96" height="7" /><rect x="480" y="833" width="72" height="7" /><circle cx="516" cy="802" r="6" />
        <rect x="196" y="617" width="20" height="8" /><rect x="196" y="656" width="14" height="8" /><circle cx="671" cy="614" r="8" /><rect x="664" y="637" width="20" height="7" />
      </g>
      <g fill="#7d6fd0" opacity=".8"><circle cx="239" cy="612" r="9" /><rect x="218" y="627" width="44" height="6" /></g>

      <g fontSize="12" fill="#939393" textAnchor="middle" {...halo}>
        {NUMBERS.map(([t, x, y, s], i) => { const [px, py] = at(t, x, y); return <text key={i} x={px} y={py}>{s}</text>; })}
      </g>
      <g fontSize="12.5" fontWeight="600" fill="#7c7c7c" textAnchor="middle" {...halo}>
        {PLACES.map(([t, x, y, w, s], i) => { const [px, py] = at(t, x, y); return <text key={i} x={px} y={py} textLength={w / TILES[t].sx}>{s}</text>; })}
        {TINTED.map(([t, x, y, w, s, c], i) => { const [px, py] = at(t, x, y); return <text key={"t" + i} x={px} y={py} fill={c} fontWeight={c === "#999" ? 400 : 600} textLength={w / TILES[t].sx}>{s}</text>; })}
      </g>
      <g fontSize="12.5" fill="#4a4a4a" fontWeight="500" {...halo}>
        {STREETS.map(([t, x1, y1, x2, y2, s], i) => {
          const [ax, ay] = at(t, x1, y1), [bx, by] = at(t, x2, y2);
          const a = (Math.atan2(by - ay, bx - ax) * 180) / Math.PI;
          return <text key={i} transform={`translate(${ax.toFixed(1)} ${ay.toFixed(1)}) rotate(${a.toFixed(1)})`} textLength={Math.hypot(bx - ax, by - ay)}>{s}</text>;
        })}
        <text transform="translate(216 1120) rotate(-34)" fontSize="13" fill="#6577a8" strokeWidth="0" textLength="76">р. Смоленка</text>
        <text fontSize="16" fill="#444"><textPath href="#embankment" textLength="150">наб. реки Смоленки</textPath></text>
      </g>

      {TOMBS.map(([t, x, y], i) => { const [px, py] = at(t, x, y); return <path key={i} transform={`translate(${px} ${py})`} d="M-2.5 3V-3A2.5 2.5 0 0 1 2.5-3V3H4V5.5H-4V3Z" fill="#8a8a8a" />; })}
      {MARKERS.map(([t, x, y, c, g], i) => { const [px, py] = at(t, x, y); return <g key={i} transform={`translate(${px} ${py})`}><circle r="8.8" fill={c} stroke="#fff" strokeWidth=".8" />{g}</g>; })}
      {PINS.map(([t, x, y, c, g], i) => { const [px, py] = at(t, x, y); return <g key={i} transform={`translate(${px} ${py})`}><path d="M-12 0A12 12 0 1 1 12 0Q12 6 6 10Q2 12 0 17Q-2 12-6 10Q-12 6-12 0Z" fill={c} />{g}</g>; })}
      {STOPS.map(([t, x, y], i) => { const [px, py] = at(t, x, y); return <g key={i} transform={`translate(${px} ${py})`}><rect x="-6.5" y="-6.5" width="13" height="13" rx="2" fill="#5a75bd" /><path d="M-4-3.5H4M-1-3V4M2.5-3V4M-4 0H-1M-4 3.5H-1" stroke="#fff" strokeWidth="1.3" /></g>; })}
      <g transform="translate(0 -6)">
        <rect x="1372.5" y="964" width="6.5" height="15" rx="1.5" fill="#555" />
        <circle cx="1375.7" cy="967.5" r="1.5" fill="#d66" /><circle cx="1375.7" cy="971.5" r="1.5" fill="#cb8" /><circle cx="1375.7" cy="975.500" r="1.5" fill="#7b7" />
      </g>

      <g transform="translate(0 -4.5)">
        <rect x="1208" y="837" width="200" height="24" rx="5" fill="#fff" fillOpacity=".93" />
        <text x="1214" y="854" fontSize="14.5" fill="#1c1c1c" textLength="182">набережная реки Смоле…</text>
        <g fill="#cc5a5c" stroke="#fff" strokeWidth="1.6">
          <circle cx="1151.5" cy="893" r="3.4" /><circle cx="1176.5" cy="887.5" r="3.4" />
          <circle cx="1252" cy="873" r="5.5" fill="#fff" stroke="#7fa4d4" /><circle cx="1252" cy="873.5" r="2.8" strokeWidth="0" />
        </g>
        <path d="M1131 891.5H1139M1268 862L1263 867" stroke="#cc5a5c" strokeWidth="2" /><path d="M1138 888.5L1143 891.5L1138 894.5ZM1259 870.5L1261 864L1266 869Z" fill="#cc5a5c" />
        <path className="drop-shadow-sm" d="M1152.500 849A24 24 0 1 1 1200.500 849C1200.500 864 1189 871 1181 873Q1177.500 874 1176.500 882Q1175.500 874 1172 873C1164 871 1152.500 864 1152.500 849Z" fill="#cb6265" />
        <path d="M1166 837H1179V860H1166ZM1180.500 843H1187V860H1180.500Z" fill="#fff" />
        <path d="M1169 840.500H1172V844H1169ZM1174 840.500H1177V844H1174ZM1169 847H1172V851H1169ZM1174 847H1177V851H1174ZM1171 855H1174.500V860H1171ZM1182 846.500H1185V848H1182ZM1182 850.500H1185V852H1182ZM1182 854.500H1185V856H1182Z" fill="#cb6265" />
      </g>
    </svg>
  );
}

/* ---------- form ---------- */

const FIELD = "block w-[370px] rounded-[5px] border border-[#62a14b] bg-white/90 pl-[29px] font-['Roboto',sans-serif] text-[18px] leading-6 placeholder:text-[#9c9c9c] placeholder:opacity-100";

function QuestionForm() {
  return (
    <form className="h-[715px] w-[490px] rounded-[5px] bg-black/60 px-[60px] pt-[39px] text-white backdrop-blur-[5px]">
      <h2 className="text-[25px] leading-8 font-medium tracking-[0.22px]">Остались вопросы?</h2>
      <p className="mt-[9px] text-[15.5px] leading-6 font-light tracking-[0.08px]">
        Заполните форму и мы свяжемся с вами в<br />блоижайшее время
      </p>
      <div className="mt-[30px] flex flex-col gap-5">
        <input className={`${FIELD} h-[60px] pb-[2px]`} placeholder="Имя" />
        <input className={`${FIELD} h-[60px] pb-[2px] tracking-[0.62px]`} placeholder="+7 (___) ___-__-__" />
        <input className={`${FIELD} h-[60px] pb-[2px]`} placeholder="E-mail" />
        <textarea className={`${FIELD} h-[89px] resize-none pt-[17px] tracking-[-0.1px]`} placeholder="Комментарий" />
      </div>
      <label className="mt-[31px] flex gap-[11px] text-[15.5px] leading-6 font-light tracking-[0.12px]">
        <input type="checkbox" className="mt-[5px] size-[13px] shrink-0" />
        <span className="whitespace-nowrap">
          Я даю согласие на <a className="underline underline-offset-2">обработку персональных<br />данных</a>
        </span>
      </label>
      <button type="button" className="mt-10 ml-[120px] block h-[49px] w-[129px] rounded-[5px] bg-[#62a14b] font-['Roboto',sans-serif] text-[16px] font-medium">
        Отправить
      </button>
    </form>
  );
}

function CompanyCard() {
  return (
    <div className="relative h-[250px] w-[1010px] bg-[repeating-linear-gradient(135deg,transparent_0_11.5px,#efefef_11.5px_17.5px,transparent_17.5px_23.05px)] bg-[length:250px_250px] bg-no-repeat pt-[29px] pl-[130px] text-[#62a14b]">
      <LogoMark className="absolute top-[13px] right-[3px] size-[226px] text-[#efefef]" />
      <div className="relative">
        <h2 className="text-[25px] leading-8 font-medium tracking-[0.55px] text-[#333]">ООО «Комфортный город»</h2>
        <div className="mt-[29px] grid grid-cols-[232px_245px_auto] gap-y-[29px]">
          <Callback />
          <Line icon={<PhoneIcon />}><span className="tracking-[0.46px]">+7 (921) 397-24-18</span></Line>
          <Line icon={<MailIcon />}><span className="tracking-[0.06px]">mail@comfortcity.spb.ru</span></Line>
          <div className="col-span-2 flex gap-[10px]">
            <PlaceIcon />
            <p className="text-[15.5px] leading-6 font-light tracking-[0.1px] text-[#212121]">
              199178, Санкт-Петербург, наб. реки Смоленки,<br />дом 3, корп. 2, офис 34-Н
            </p>
          </div>
          <div className="pt-px"><Socials /></div>
        </div>
      </div>
    </div>
  );
}

/* ---------- page ---------- */

const SEO = "Активный образ жизни – залог нашего здоровья и счастья. В особенности активный образ жизни важен для детей, ведь игра на уличных спортивных площадках не только развивает их физически, но и учит общаться со своими сверстниками. Выяснено, что, играя на детских игровых комплексах, ребёнок становится ловким, гибким, у него правильно развивается мышечная мускулатура, а также происходит более быстрое психологическое и социальное развитие. Взрослые же с помощью уличных систем для тренировок могут поддерживать спортивную форму, даже не прибегая к закрытым залам.";

function FooterColumn({ title, items, children }) {
  return (
    <div className="pt-px">
      <h3 className="text-[17px] leading-6 font-semibold tracking-[0.3px]">{title}</h3>
      <ul className="mt-[26px] flex flex-col gap-[14px] text-[15.5px] leading-6 font-light tracking-[0.14px]">
        {items.map((s) => <li key={s}>{s}</li>)}
      </ul>
      {children}
    </div>
  );
}

export default function App() {
  return (
    <div className="w-[1920px] bg-white font-['Noto_Sans',sans-serif] text-[#212121] [--ink:#212121]">
      <header className="mx-auto flex h-[130px] w-[1530px] items-center">
        <div className="w-[392px]"><Logo /></div>
        <nav className="-mt-px flex flex-1 text-[17px] leading-6">
          <a className="w-[168px] tracking-[-0.05px]">Главная</a>
          <a className="w-[212px] tracking-[0.24px]">Направления</a>
          <a className="w-[174px] tracking-[0.45px]">Проекты</a>
          <a className="w-[200px] tracking-[0.2px]">О компании</a>
          <a className="tracking-[0.42px]">Контакты</a>
        </nav>
        <div className="text-[#62a14b]"><Callback /></div>
      </header>

      <main>
        <div className="mx-auto w-[1530px]">
          <div className="-mt-0.5 text-[13px] leading-5 tracking-[0.13px]">
            Главная / <span className="tracking-[0.45px] text-[#dedede]">Контакты</span>
          </div>
          <h1 className="mt-[55px] h-[77px] text-[29px] leading-10 font-medium tracking-[1.2px]">Контакты</h1>
        </div>

        <section className="grid grid-cols-1 grid-rows-[280px_650px]">
          <div className="col-start-1 row-start-2"><CityMap /></div>
          <div className="z-10 col-start-1 row-span-2 row-start-1 mx-auto flex w-[1530px] items-start gap-[30px]">
            <QuestionForm />
            <CompanyCard />
          </div>
        </section>

        <section className="mx-auto h-[452px] w-[1530px] pt-[99px]">
          <h2 className="text-[25px] leading-8 font-medium tracking-[1.25px]">Сео текст</h2>
          <div className="mt-[19px] space-y-[10px] pr-3 text-[15.5px] leading-6 font-light tracking-[0.12px]">
            <p>{SEO}</p>
            <p>{SEO}</p>
          </div>
        </section>
      </main>

      <footer className="h-[588px] bg-[#212121] pt-[78px] text-white [--ink:#fff]">
        <div className="mx-auto w-[1530px]">
          <div className="grid h-[321px] grid-cols-[407px_485px_465px_auto] border-b border-[#cfcfcf]">
            <div className="pt-[2px] text-[15.5px] leading-6 font-light">
              <Logo />
              <p className="mt-[26px] pl-px tracking-[0.18px]">Благоустройство территорий</p>
              <p className="mt-6 tracking-[0.2px]"><a className="underline underline-offset-[2px]">Политика конфиденциальности</a></p>
              <p className="mt-[27px] pl-px tracking-[0.1px]">Все права защищены. © 2020<br /><span className="tracking-[0.3px]">ООО «Комфортный город»</span></p>
            </div>
            <FooterColumn title="Обустройство площадок" items={["Детские игровые площадки", "Конструкции для лазания", "Спортивные площадки и тренажеры", "Площадки для дрессировки и выгула собак", "Покрытия для площадок", "Малые Архитектурные Формы"]} />
            <FooterColumn title="Благоустройство города" items={["Ландшафтное проектирование и дизайн", "Здоровье и активность пожилых людей", "Городская и парковая мебель", "Озеленение", "Освещение и wi-fi", "Работы по благоустройству среды"]} />
            <FooterColumn title="Комфортный город" items={["Проекты", "О компании", "Контакты"]}>
              <div className="mt-[56px]"><Socials /></div>
            </FooterColumn>
          </div>
          <div className="mt-[60px] grid grid-cols-[292px_305px_348px_408px_174px]">
            <Callback />
            <Line icon={<PhoneIcon />}><span className="tracking-[0.46px]">+7 (921) 397-24-18</span></Line>
            <Line icon={<MailIcon />}><span className="tracking-[0.06px]">mail@comfortcity.spb.ru</span></Line>
            <div className="flex gap-[10px]">
              <PlaceIcon />
              <p className="text-[15.5px] leading-6 font-light tracking-[0.12px]">199178, Санкт-Петербург, наб. реки<br />Смоленки, дом 3, корп. 2, офис 34-Н</p>
            </div>
            <button type="button" className="h-[49px] rounded-[5px] bg-[#62a14b] font-['Roboto',sans-serif] text-[16px] font-medium">Заказать проект</button>
          </div>
        </div>
      </footer>
    </div>
  );
}
